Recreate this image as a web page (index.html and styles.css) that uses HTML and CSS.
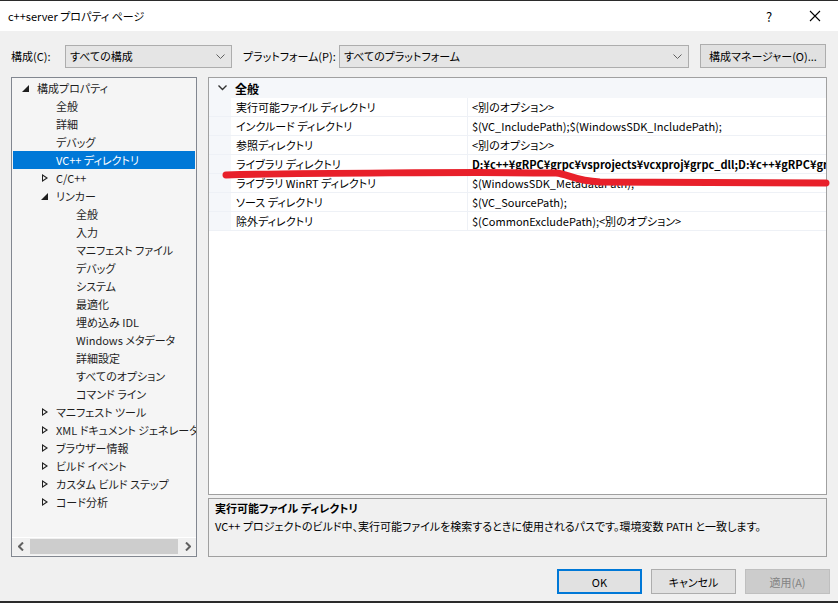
FILE: index.html
```html
<!doctype html>
<html>
  <head>
    <meta charset="utf-8">
    <link rel="stylesheet" href="styles.css">
  </head>
  <body>
    <div class="window">
      <div class="titlebar">
        <span class="title">c++server プロパティ ページ</span>
        <span class="help">?</span>
        <span class="close">
          <svg width="12" height="12" viewBox="0 0 12 12"><path d="M1 1L11 11M11 1L1 11" stroke="#000" stroke-width="1.1"/></svg>
        </span>
      </div>

      <div class="content">
        <div class="toolbar">
          <span class="lbl lbl-config">構成(C):</span>
          <div class="combo combo-config">
            <span>すべての構成</span>
            <svg class="chev" width="9" height="5" viewBox="0 0 9 5"><path d="M0.5 0.5L4.5 4.5L8.5 0.5" fill="none" stroke="#606060"/></svg>
          </div>
          <span class="lbl lbl-platform">プラットフォーム(P):</span>
          <div class="combo combo-platform">
            <span>すべてのプラットフォーム</span>
            <svg class="chev" width="9" height="5" viewBox="0 0 9 5"><path d="M0.5 0.5L4.5 4.5L8.5 0.5" fill="none" stroke="#606060"/></svg>
          </div>
          <div class="btn btn-manager">構成マネージャー(O)...</div>
        </div>

        <div class="main">
          <div class="tree">
            <div class="tree-list">
              <div class="node lv0"><span class="arw open"></span>構成プロパティ</div>
              <div class="node lv1"><span class="arw"></span>全般</div>
              <div class="node lv1"><span class="arw"></span>詳細</div>
              <div class="node lv1"><span class="arw"></span>デバッグ</div>
              <div class="node lv1 selected"><span class="arw"></span>VC++ ディレクトリ</div>
              <div class="node lv1"><span class="arw closed"></span>C/C++</div>
              <div class="node lv1"><span class="arw open"></span>リンカー</div>
              <div class="node lv2"><span class="arw"></span>全般</div>
              <div class="node lv2"><span class="arw"></span>入力</div>
              <div class="node lv2"><span class="arw"></span>マニフェスト ファイル</div>
              <div class="node lv2"><span class="arw"></span>デバッグ</div>
              <div class="node lv2"><span class="arw"></span>システム</div>
              <div class="node lv2"><span class="arw"></span>最適化</div>
              <div class="node lv2"><span class="arw"></span>埋め込み IDL</div>
              <div class="node lv2"><span class="arw"></span>Windows メタデータ</div>
              <div class="node lv2"><span class="arw"></span>詳細設定</div>
              <div class="node lv2"><span class="arw"></span>すべてのオプション</div>
              <div class="node lv2"><span class="arw"></span>コマンド ライン</div>
              <div class="node lv1"><span class="arw closed"></span>マニフェスト ツール</div>
              <div class="node lv1"><span class="arw closed"></span>XML ドキュメント ジェネレーター</div>
              <div class="node lv1"><span class="arw closed"></span>ブラウザー情報</div>
              <div class="node lv1"><span class="arw closed"></span>ビルド イベント</div>
              <div class="node lv1"><span class="arw closed"></span>カスタム ビルド ステップ</div>
              <div class="node lv1"><span class="arw closed"></span>コード分析</div>
            </div>
            <div class="hscroll">
              <span class="sb-btn">
                <svg width="6" height="9" viewBox="0 0 6 9"><path d="M5 0.5L1 4.5L5 8.5" fill="none" stroke="#606060" stroke-width="2"/></svg>
              </span>
              <span class="sb-thumb"></span>
              <span class="sb-btn">
                <svg width="6" height="9" viewBox="0 0 6 9"><path d="M1 0.5L5 4.5L1 8.5" fill="none" stroke="#606060" stroke-width="2"/></svg>
              </span>
            </div>
          </div>

          <div class="right">
            <div class="grid">
              <div class="group">
                <span class="group-chev">
                  <svg width="9" height="6" viewBox="0 0 9 6"><path d="M0.5 0.5L4.5 4.5L8.5 0.5" fill="none" stroke="#333" stroke-width="1.4"/></svg>
                </span>
                <span class="group-name">全般</span>
              </div>
              <div class="prop"><span class="strip"></span><span class="pname">実行可能ファイル ディレクトリ</span><span class="pval">&lt;別のオプション&gt;</span></div>
              <div class="prop"><span class="strip"></span><span class="pname">インクルード ディレクトリ</span><span class="pval">$(VC_IncludePath);$(WindowsSDK_IncludePath);</span></div>
              <div class="prop"><span class="strip"></span><span class="pname">参照ディレクトリ</span><span class="pval">&lt;別のオプション&gt;</span></div>
              <div class="prop"><span class="strip"></span><span class="pname">ライブラリ ディレクトリ</span><span class="pval bold">D:¥c++¥gRPC¥grpc¥vsprojects¥vcxproj¥grpc_dll;D:¥c++¥gRPC¥grpc¥vsprojects¥vcxproj</span></div>
              <div class="prop"><span class="strip"></span><span class="pname">ライブラリ WinRT ディレクトリ</span><span class="pval">$(WindowsSDK_MetadataPath);</span></div>
              <div class="prop"><span class="strip"></span><span class="pname">ソース ディレクトリ</span><span class="pval">$(VC_SourcePath);</span></div>
              <div class="prop"><span class="strip"></span><span class="pname">除外ディレクトリ</span><span class="pval">$(CommonExcludePath);&lt;別のオプション&gt;</span></div>
            </div>
            <div class="desc">
              <div class="desc-title">実行可能ファイル ディレクトリ</div>
              <div class="desc-text">VC++ プロジェクトのビルド中、実行可能ファイルを検索するときに使用されるパスです。環境変数 PATH と一致します。</div>
            </div>
          </div>
        </div>

        <div class="buttons">
          <div class="btn btn-ok">OK</div>
          <div class="btn">キャンセル</div>
          <div class="btn disabled">適用(A)</div>
        </div>
      </div>
    </div>

    <svg class="markup" width="838" height="603" viewBox="0 0 838 603">
      <path d="M226 175 C 300 173, 480 172, 556 173 C 568 174, 575 181, 600 182 L 826 183" fill="none" stroke="#e8202a" stroke-width="7" stroke-linecap="round"/>
    </svg>
  </body>
</html>
```

FILE: styles.css
```css
body {
  margin: 0;
  width: 838px;
  height: 603px;
  overflow: hidden;
  background: #f0f0f0;
  font-family: "Noto Sans CJK JP", sans-serif;
  font-feature-settings: "palt";
  font-size: 11px;
  color: #000;
  position: relative;
}

.window {
  height: 603px;
  box-sizing: border-box;
  border-top: 1px solid #2b2b2b;
  border-bottom: 2px solid #2b2b2b;
  display: flex;
  flex-direction: column;
}

.titlebar {
  height: 30px;
  background: #fff;
  display: flex;
  align-items: center;
  padding-left: 8px;
}
.title { flex: 1; }
.help {
  width: 12px;
  text-align: center;
  margin-right: 34px;
  font-size: 13px;
}
.close {
  width: 12px;
  height: 12px;
  margin-right: 17px;
  display: flex;
}

.content {
  padding: 13px 11px 0 11px;
  flex: 1;
}

.toolbar {
  display: flex;
  align-items: center;
  height: 24px;
}
.lbl {
  white-space: nowrap;
  flex: none;
}
.lbl-config { width: 54px; }
.lbl-platform { width: 96px; }
.combo {
  height: 23px;
  box-sizing: border-box;
  border: 1px solid #adadad;
  background: #e5e5e5;
  display: flex;
  align-items: center;
  padding: 0 0 0 4px;
  flex: none;
}
.combo span { flex: 1; }
.combo .chev { margin-right: 6px; }
.combo-config { width: 167px; margin-right: 11px; }
.combo-platform { width: 350px; margin-right: 11px; }

.btn {
  height: 24px;
  box-sizing: border-box;
  border: 1px solid #adadad;
  background: #e1e1e1;
  display: flex;
  align-items: center;
  justify-content: center;
  white-space: nowrap;
}
.btn-manager { width: 126px; }

.main {
  display: flex;
  margin-top: 9px;
  height: 480px;
}

.tree {
  width: 186px;
  box-sizing: border-box;
  border: 1px solid #828790;
  background: #f5f5f5;
  display: flex;
  flex-direction: column;
  margin-right: 11px;
  color: #1e1e1e;
}
.tree-list {
  flex: 1;
  padding-top: 1px;
  overflow: hidden;
}
.node {
  height: 18px;
  margin: 0 1px;
  display: flex;
  align-items: center;
  white-space: nowrap;
}
.lv0 { padding-left: 6px; }
.lv1 { padding-left: 25px; }
.lv2 { padding-left: 45px; }
.node.selected {
  background: #0078d7;
  color: #fff;
}
.arw {
  width: 12px;
  height: 18px;
  margin-right: 6px;
  flex: none;
  position: relative;
}
.arw.open::before {
  content: "";
  position: absolute;
  left: 3px;
  top: 6px;
  border-style: solid;
  border-width: 0 0 7px 7px;
  border-color: transparent transparent #1e1e1e transparent;
}
.arw.closed::before {
  content: "";
  position: absolute;
  left: 4px;
  top: 5px;
  border-style: solid;
  border-width: 4px 0 4px 6px;
  border-color: transparent transparent transparent #1e1e1e;
}
.arw.closed::after {
  content: "";
  position: absolute;
  left: 5px;
  top: 7px;
  border-style: solid;
  border-width: 2px 0 2px 3px;
  border-color: transparent transparent transparent #f5f5f5;
}

.hscroll {
  height: 17px;
  border-top: 1px solid #fff;
  background: #f0f0f0;
  display: flex;
  align-items: center;
  margin-bottom: 1px;
}
.sb-btn {
  width: 17px;
  height: 17px;
  display: flex;
  align-items: center;
  justify-content: center;
}
.sb-thumb {
  flex: 1;
  height: 15px;
  background: #cdcdcd;
  margin: 0 1px;
}

.right {
  width: 619px;
  display: flex;
  flex-direction: column;
}

.grid {
  height: 418px;
  box-sizing: border-box;
  border: 1px solid #a0a0a0;
  background: #fff;
}
.group {
  height: 20px;
  background: #f5f7fa;
  display: flex;
  align-items: center;
}
.group-chev {
  width: 26px;
  display: flex;
  justify-content: center;
}
.group-name {
  font-weight: bold;
  font-size: 12px;
}
.prop {
  height: 18px;
  border-bottom: 1px solid #eef1f6;
  display: flex;
  white-space: nowrap;
}
.strip {
  width: 22px;
  background: #f5f7fa;
  flex: none;
}
.pname {
  width: 231px;
  padding-left: 5px;
  border-right: 1px solid #eef1f6;
  flex: none;
  line-height: 18px;
}
.pval {
  flex: 1;
  padding-left: 4px;
  overflow: hidden;
  line-height: 18px;
}
.bold { font-weight: bold; }

.desc {
  margin-top: 3px;
  height: 59px;
  box-sizing: border-box;
  border: 1px solid #a0a0a0;
  padding-left: 6px;
  line-height: 18px;
}
.desc-title { font-weight: bold; }

.buttons {
  display: flex;
  justify-content: flex-end;
  gap: 9px;
  margin-top: 12px;
  margin-right: -3px;
}
.buttons .btn {
  width: 85px;
  height: 25px;
}
.btn-ok {
  border: 2px solid #0078d7;
}
.btn.disabled {
  background: #cccccc;
  border-color: #bfbfbf;
  color: #838383;
}

.markup {
  position: absolute;
  left: 0;
  top: 0;
  pointer-events: none;
}
```
